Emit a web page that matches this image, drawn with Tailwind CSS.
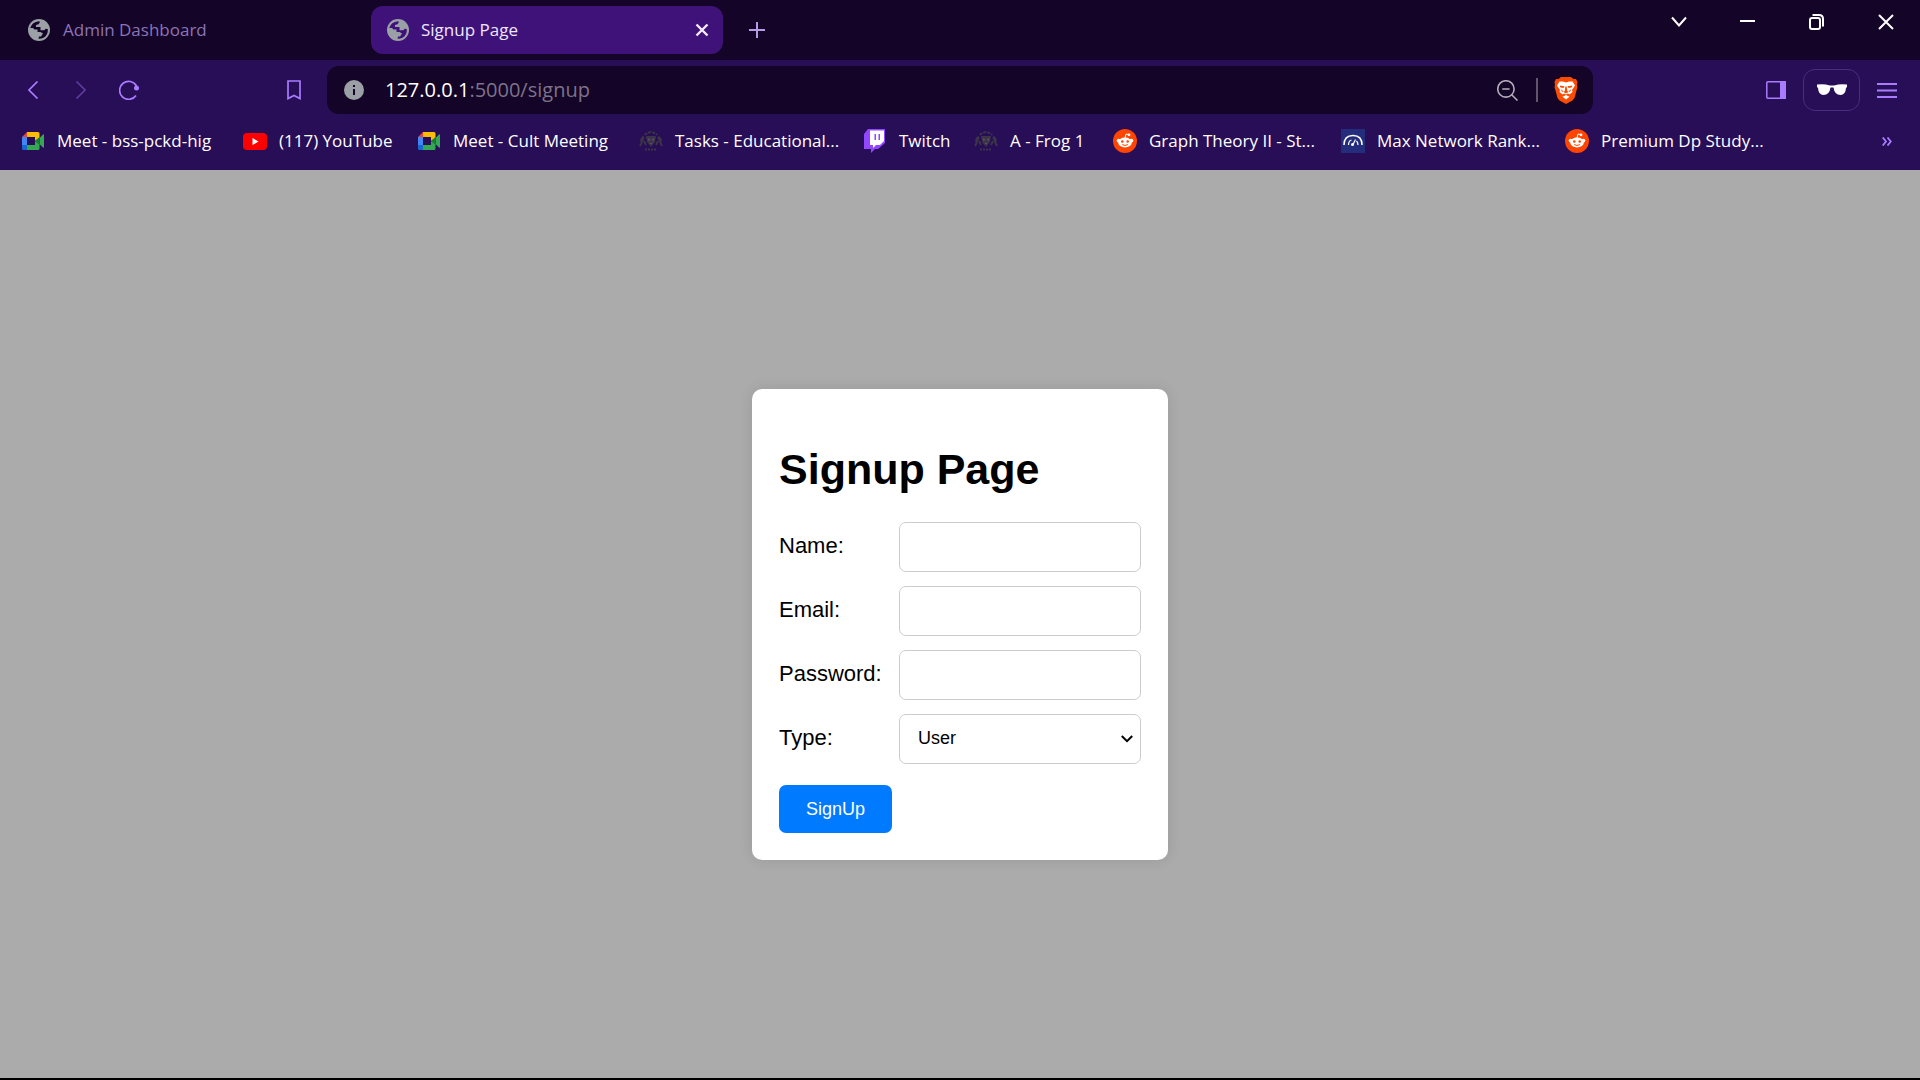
<!DOCTYPE html>
<html lang="en">
<head>
<meta charset="utf-8">
<title>Signup Page</title>
<script src="https://cdn.jsdelivr.net/npm/@tailwindcss/browser@4"></script>
</head>
<body class="flex min-h-screen flex-col bg-[#ababab] font-['Open_Sans',sans-serif] text-white">
<svg class="hidden" aria-hidden="true">
  <symbol id="globe" viewBox="0 0 22 22">
    <circle cx="11" cy="11" r="11" fill="#9aa0a6"/>
    <path fill="currentColor" d="M2.200 9Q4 3 11 2.200l1 .8-1.500 2.200-2.500.8v2h4.500v3.200h3q1.500 0 2-1.500L19.800 10q.5 6-4.300 8.700-2.500 1.300-5 1.100l.5-2.300h2l2-3-2.500-1.500H9.500V10.500H6.500L5 9z"/>
  </symbol>
  <symbol id="meet" viewBox="0 0 22 18">
    <path fill="#ea4335" d="M5 0v5H0z"/><path fill="#4285f4" d="M0 5h5v8H0z"/><path fill="#1967d2" d="M0 13h5v5H1.500A1.500 1.500 0 0 1 0 16.500z"/>
    <path fill="#fbbc04" d="M5 0h11a1.500 1.500 0 0 1 1.500 1.500V6L13 9V5H5z"/><path fill="#34a853" d="M5 13h8V9l4.500 3v4.500A1.500 1.500 0 0 1 16 18H5zM17.500 6 21 2.500q1-.5 1 .5v12q0 1-1 .5L17.500 12z"/><path fill="#188038" d="m13 9 4.500-4v8z"/>
  </symbol>
  <symbol id="crest" viewBox="0 0 24 20">
    <g fill="none" stroke="#3c3547" stroke-width="2"><path d="M6 4q1-2 6-3 5 1 6 3" stroke-dasharray="3 1"/><path d="M5 6q-3 2-2 5" stroke-width="3"/><path d="M19 6q3 2 2 5" stroke-width="3"/><path d="m3 11-2 4m4-5 2 4M21 11l2 4m-4-5-2 4"/><path d="M6 18.500h12" stroke-dasharray="2 1"/></g>
    <path fill="#3c3547" d="M7 5h10l-1 6-4 5-4-5z"/><path fill="#5b5166" d="m8.500 7 3 1.500L9.500 10zM15.500 7l-3 1.500 2 1.500zM11 12h2v1h-2z"/>
  </symbol>
  <symbol id="reddit" viewBox="0 0 24 24">
    <circle cx="12" cy="12" r="12" fill="#ff4500"/><g fill="#fff"><ellipse cx="12" cy="13.500" rx="6.800" ry="5"/><circle cx="5.600" cy="11.600" r="1.900"/><circle cx="18.400" cy="11.600" r="1.900"/><circle cx="16" cy="5.800" r="1.400"/></g>
    <path d="m12 9 1-4 3 .8" fill="none" stroke="#fff"/><g fill="#ff4500"><circle cx="9.300" cy="12.500" r="1.300"/><circle cx="14.700" cy="12.500" r="1.300"/></g><path d="M9.200 15.500q2.800 2 5.600 0" fill="none" stroke="#ff4500"/>
  </symbol>
</svg>

<header>
  <div class="flex h-[60px] items-center bg-[#140427] text-[17px]">
    <div class="flex w-[371px] items-center gap-[13px] pl-7 text-[#8b74b8]">
      <svg class="size-[22px] text-[#140427]"><use href="#globe"/></svg><span>Admin Dashboard</span>
    </div>
    <div class="flex h-12 w-[352px] items-center gap-3 rounded-xl bg-[#3f127a] pr-[14px] pl-4 text-[#efe6ff]">
      <svg class="size-[22px] text-[#3f127a]"><use href="#globe"/></svg><span>Signup Page</span>
      <button class="ml-auto" aria-label="Close tab"><svg class="size-[14px]" viewBox="0 0 14 14" fill="none" stroke="#f3ecff" stroke-width="2.400"><path d="m1.500 1.500 11 11m0-11-11 11"/></svg></button>
    </div>
    <button class="ml-[26px]" aria-label="New tab"><svg class="size-4" viewBox="0 0 16 16" stroke="#b39be6" stroke-width="2"><path d="M8 0v16M0 8h16"/></svg></button>
    <div class="mr-[26px] mb-[17px] ml-auto flex items-center gap-[53px]">
      <button aria-label="Search tabs"><svg class="size-4" viewBox="0 0 16 16" fill="none" stroke="#fff" stroke-width="2"><path d="m1 3.500 7 8 7-8"/></svg></button>
      <button aria-label="Minimize"><svg class="size-4" viewBox="0 0 16 16" stroke="#fff" stroke-width="2"><path d="M0 7h15"/></svg></button>
      <button aria-label="Restore"><svg class="size-4" viewBox="0 0 16 16" fill="none" stroke="#fff" stroke-width="2"><rect x="1" y="4" width="10" height="11" rx="2"/><path d="M3.500 1H10q4 0 4 4v7.500"/></svg></button>
      <button aria-label="Close window"><svg class="size-4" viewBox="0 0 16 16" stroke="#fff" stroke-width="2"><path d="m1 1 14 14m0-14L1 15"/></svg></button>
    </div>
  </div>

  <div class="flex h-[60px] items-center bg-[#280d57]">
    <div class="flex w-[327px] items-center pr-[26px] pl-7">
      <button class="mr-9" aria-label="Back"><svg class="h-[18px] w-[11px]" viewBox="0 0 11 18" fill="none" stroke="#a87cff" stroke-width="1.700"><path d="M9.500.5 1 9l8.500 8.500"/></svg></button>
      <button class="mr-[33px]" aria-label="Forward"><svg class="h-[18px] w-[11px]" viewBox="0 0 11 18" fill="none" stroke="#5d3a9c" stroke-width="1.700"><path d="M1.500.5 10 9l-8.500 8.500"/></svg></button>
      <button aria-label="Reload"><svg class="size-5" viewBox="0 0 20 20" fill="none" stroke="#a87cff" stroke-width="1.700"><path d="M17 15.500A9 9 0 1 1 17.500 6"/><circle cx="17.500" cy="8" r="2.500" fill="#a87cff" stroke="none"/></svg></button>
      <button class="ml-auto" aria-label="Bookmark"><svg class="h-5 w-[14px]" viewBox="0 0 14 20" fill="none" stroke="#a87cff" stroke-width="1.700"><path d="M1 1h12v17.500L7 15.500l-6 3z"/></svg></button>
    </div>
    <div class="flex h-12 grow items-center rounded-xl bg-[#140427] pr-[15px] pl-[17px]">
      <svg class="size-5" viewBox="0 0 20 20"><circle cx="10" cy="10" r="10" fill="#9aa0a6"/><path d="M9 9h2v6H9zM9 5h2v2H9z" fill="#140427"/></svg>
      <div role="textbox" tabindex="0" aria-label="Address" class="ml-[21px] text-xl">127.0.0.1<span class="text-[#7d738a]">:5000/signup</span></div>
      <button class="ml-auto" aria-label="Zoom"><svg class="size-[21px]" viewBox="0 0 20 20" fill="none" stroke="#b4aebc" stroke-width="1.500"><circle cx="8.500" cy="8.500" r="7.800"/><path d="M5 8.500h7M14 14l5.500 5.500"/></svg></button>
      <span class="mr-4 ml-[18px] h-6 w-[2px] bg-[#5f566c]"></span>
      <button aria-label="Brave Shields"><svg class="h-[27px] w-6" viewBox="0 0 24 27"><path fill="#fb4b00" d="M7 0h10l2.500 2L22 2l1.500 3-.5 3 .5 2-3 11-2 2.500L12 27l-6.500-3.500-2-2.500-3-11L1 8 .5 5 2 2l2.500 0z"/><path fill="#fff" d="m12 5.500 3-1 3.500 0 2.500 4-3 4.500.5 2-3 2.500-1.500-1-2 1-2-1-1.500 1-3-2.500.5-2L3 8.500l2.500-4H9zM12 18l3.500 1.700L12 22.500l-3.500-2.800z"/><path fill="#fb4b00" d="m5.500 8.500 5 .8-1 1.700-3-.6zM18.500 8.500l-5 .8 1 1.700 3-.6zM11.300 9.500h1.400l.5 4.500 1.600.8-2.800 1.700-2.800-1.700 1.600-.8zM7 12l2 2-1 1.500zM17 12l-2 2 1 1.500z"/></svg></button>
    </div>
    <div class="flex w-[327px] items-center justify-end pr-[23px]">
      <button class="mr-[17px]" aria-label="Sidebar"><svg class="h-[18px] w-5" viewBox="0 0 20 18"><rect x=".8" y=".8" width="18.400" height="16.400" rx="1" fill="none" stroke="#a87cff" stroke-width="1.500"/><path d="M14 0h6v18h-6z" fill="#a87cff"/></svg></button>
      <button class="mr-[17px] flex h-[42px] w-[57px] items-center justify-center rounded-xl border border-[#4a2d7d]" aria-label="Private profile"><svg class="h-3 w-[30px]" viewBox="0 0 30 12"><path fill="#fff" d="M0 .5Q7-.5 13 1.500h4Q23-.5 30 .5V3l-1 1q-.5 7-5.500 7-6 0-7-7.500h-3Q12.500 11 6.500 11 1.500 11 1 4L0 3z"/></svg></button>
      <button aria-label="Menu"><svg class="size-5" viewBox="0 0 20 20" stroke="#a87cff" stroke-width="1.800"><path d="M0 4h20M0 10.500h20M0 17h20"/></svg></button>
    </div>
  </div>

  <nav class="flex h-[50px] items-center bg-[#280d57] pb-2 pl-[21px] text-[17px] whitespace-nowrap" aria-label="Bookmarks">
    <a href="#" class="flex w-[222px] items-center gap-3"><svg class="h-[18px] w-6"><use href="#meet"/></svg>Meet - bss-pckd-hig</a>
    <a href="#" class="flex w-[174px] items-center gap-3"><svg class="h-[17px] w-6" viewBox="0 0 24 17"><rect width="24" height="17" rx="4" fill="red"/><path fill="#fff" d="m9.500 5 6 3.500-6 3.500z"/></svg>(117) YouTube</a>
    <a href="#" class="flex w-[222px] items-center gap-3"><svg class="h-[18px] w-6"><use href="#meet"/></svg>Meet - Cult Meeting</a>
    <a href="#" class="flex w-[224px] items-center gap-3"><svg class="h-5 w-6"><use href="#crest"/></svg>Tasks - Educational...</a>
    <a href="#" class="flex w-[111px] items-center gap-3"><svg class="size-6" viewBox="0 0 24 24"><path fill="#9146ff" d="M5 0h17v14l-7 6h-3l-4 4v-4H1V5z"/><path fill="#fff" d="M7 1.500h14V12l-4 4h-4l-3 3v-3H7z"/><path fill="#9146ff" d="M11.500 5H13v6h-1.500zM15.500 5H17v6h-1.500z"/></svg>Twitch</a>
    <a href="#" class="flex w-[139px] items-center gap-3"><svg class="h-5 w-6"><use href="#crest"/></svg>A - Frog 1</a>
    <a href="#" class="flex w-[228px] items-center gap-3"><svg class="size-6"><use href="#reddit"/></svg>Graph Theory II - St...</a>
    <a href="#" class="flex w-[224px] items-center gap-3"><svg class="size-6" viewBox="0 0 24 24"><path fill="#232d7c" d="M0 0h24v24H0z"/><g fill="none" stroke="#fff"><path d="M3 16q0-9.500 9-9.500t9 9.500" stroke-width="1.500"/><path d="M7.500 16q0-4 3-5M15.500 12Q17 13.500 17 16M12 15.500l2.500-5" stroke-width="1.200"/></g><circle cx="11.500" cy="15.500" r="1.500" fill="#fff"/></svg>Max Network Rank...</a>
    <a href="#" class="flex w-[224px] items-center gap-3"><svg class="size-6"><use href="#reddit"/></svg>Premium Dp Study...</a>
    <button class="mr-7 ml-auto" aria-label="More bookmarks"><svg class="h-[9px] w-[10px]" viewBox="0 0 10 9" fill="none" stroke="#a87cff" stroke-width="1.800"><path d="M.7.5 4 4.500.7 8.500M5.500.5 8.800 4.500 5.500 8.500"/></svg></button>
  </nav>
</header>

<main class="flex grow items-center justify-center border-b-2 border-black font-['Liberation_Sans',Arial,sans-serif] text-black">
  <form class="w-[416px] rounded-[10px] bg-white p-[27px] shadow-[0_0_14px_rgba(0,0,0,0.1)]">
    <h1 class="my-7 text-[43px] leading-[50px] font-bold">Signup Page</h1>
    <div class="grid grid-cols-[120px_1fr] items-center gap-y-[14px] text-[22px]">
      <label for="name" class="pb-[2px]">Name:</label>
      <input id="name" type="text" class="h-[50px] w-full rounded-[7px] border border-[#ccc] bg-white px-5 text-lg">
      <label for="email" class="pb-[2px]">Email:</label>
      <input id="email" type="email" class="h-[50px] w-full rounded-[7px] border border-[#ccc] bg-white px-5 text-lg">
      <label for="password" class="pb-[2px]">Password:</label>
      <input id="password" type="password" class="h-[50px] w-full rounded-[7px] border border-[#ccc] bg-white px-5 text-lg">
      <label for="type" class="pb-[2px]">Type:</label>
      <div class="relative">
        <select id="type" class="block h-[50px] w-full appearance-none rounded-[7px] border border-[#ccc] bg-white px-[18px] pb-[2px] text-lg"><option>User</option><option>Admin</option></select>
        <svg class="pointer-events-none absolute top-[21px] right-2 h-2 w-3" viewBox="0 0 12 8" fill="none" stroke="#000" stroke-width="2"><path d="m.8 1 5.200 5.200L11.200 1"/></svg>
      </div>
    </div>
    <button type="button" class="mt-[21px] block h-12 w-[113px] rounded-[7px] bg-[#007bff] text-lg text-white">SignUp</button>
  </form>
</main>
</body>
</html>
